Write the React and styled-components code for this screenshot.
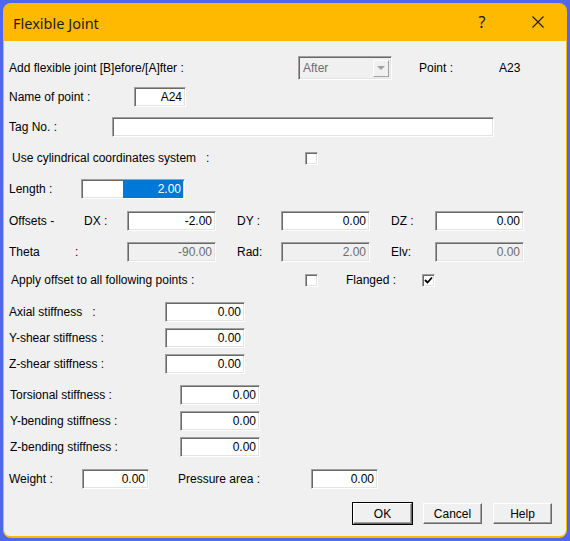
import React from 'react';
import styled, { createGlobalStyle } from 'styled-components';

const GlobalStyle = createGlobalStyle`
  html, body {
    margin: 0;
    padding: 0;
    background: #4f66ee;
  }
  body {
    font-family: "Liberation Sans", Arial, sans-serif;
  }
`;

const Screen = styled.div`
  width: 570px;
  height: 541px;
  padding: 3px;
  box-sizing: border-box;
`;

const Window = styled.div`
  width: 564px;
  height: 535px;
  background: #ffb900;
  border-radius: 8px;
  display: flex;
  flex-direction: column;
  overflow: hidden;
  padding: 0 1px 2px 1px;
  box-sizing: border-box;
`;

const TitleBar = styled.div`
  height: 38px;
  display: flex;
  align-items: center;
  padding-left: 9px;
  color: #1c1c1c;
  font-family: "Noto Sans", "Open Sans", sans-serif;
  font-size: 14.5px;
  flex-shrink: 0;
`;

const TitleText = styled.div`
  flex: 1;
  padding-top: 1px;
`;

const TitleButton = styled.div`
  width: 56px;
  height: 38px;
  display: flex;
  align-items: center;
  justify-content: center;
  font-size: 16px;
`;

const Body = styled.div`
  flex: 1;
  background: #f0f0f0;
  display: flex;
  flex-direction: column;
  padding: 15px 14px 0 5px;
  color: #000;
  font-size: 12px;
  border-radius: 0 0 6px 6px;
`;

const Row = styled.div`
  display: flex;
  align-items: center;
  height: ${(p) => p.$h || 20}px;
  margin-top: ${(p) => p.$top || 0}px;
`;

const Label = styled.div`
  width: ${(p) => p.$w}px;
  padding-left: ${(p) => p.$pl || 0}px;
  box-sizing: border-box;
  white-space: pre;
  flex-shrink: 0;
`;

const Field = styled.div`
  width: ${(p) => p.$w}px;
  height: ${(p) => p.$h || 20}px;
  box-sizing: border-box;
  flex-shrink: 0;
  background: ${(p) => (p.$disabled ? '#f0f0f0' : '#fff')};
  color: ${(p) => (p.$disabled ? '#6d6d6d' : '#000')};
  border-top: 1px solid #a0a0a0;
  border-left: 1px solid #a0a0a0;
  border-right: 1px solid #fff;
  border-bottom: 1px solid #fff;
  box-shadow: inset 1px 1px 0 #696969, inset -1px -1px 0 #e3e3e3;
  display: flex;
  align-items: center;
  justify-content: ${(p) => (p.$left ? 'flex-start' : 'flex-end')};
  padding: 0 3px 0 4px;
  overflow: hidden;
`;

const Selected = styled.span`
  background: #0078d7;
  color: #fff;
  align-self: stretch;
  display: flex;
  align-items: center;
  justify-content: flex-end;
  margin-right: -2px;
  padding-right: 2px;
`;

const Combo = styled(Field)`
  padding: 0 2px 0 4px;
  justify-content: space-between;
`;

const ComboArrow = styled.div`
  width: 16px;
  height: 17px;
  background: #f0f0f0;
  border-top: 1px solid #fff;
  border-left: 1px solid #fff;
  border-right: 1px solid #a0a0a0;
  border-bottom: 1px solid #a0a0a0;
  box-sizing: border-box;
  display: flex;
  align-items: center;
  justify-content: center;
`;

const Check = styled.div`
  width: 13px;
  height: 13px;
  box-sizing: border-box;
  flex-shrink: 0;
  background: #fff;
  border-top: 1px solid #a0a0a0;
  border-left: 1px solid #a0a0a0;
  border-right: 1px solid #fff;
  border-bottom: 1px solid #fff;
  box-shadow: inset 1px 1px 0 #696969, inset -1px -1px 0 #e3e3e3;
  display: flex;
  align-items: center;
  justify-content: center;
`;

const Gap = styled.div`
  width: ${(p) => p.$w}px;
  flex-shrink: 0;
`;

const ButtonBar = styled.div`
  display: flex;
  justify-content: flex-end;
  gap: 11px;
  margin-top: 14px;
`;

const Button = styled.div`
  width: 59px;
  height: 21px;
  box-sizing: border-box;
  background: #f0f0f0;
  border-top: 1px solid #fff;
  border-left: 1px solid #fff;
  border-right: 1px solid #696969;
  border-bottom: 1px solid #696969;
  box-shadow: inset -1px -1px 0 #a0a0a0;
  outline: ${(p) => (p.$default ? '1px solid #000' : 'none')};
  display: flex;
  align-items: center;
  justify-content: center;
  font-size: 12px;
`;

const CheckMark = () => (
  <svg width="9" height="9" viewBox="0 0 9 9">
    <path d="M1 4 L3.5 6.5 L8 1.5" stroke="#000" strokeWidth="1.8" fill="none" />
  </svg>
);

const CloseIcon = () => (
  <svg width="12" height="12" viewBox="0 0 12 12">
    <path d="M0.5 0.5 L11.5 11.5 M11.5 0.5 L0.5 11.5" stroke="#1c1c1c" strokeWidth="1.1" />
  </svg>
);

const StiffRow = ({ top, label, w, pl }) => (
  <Row $top={top}>
    <Label $w={w} $pl={pl}>{label}</Label>
    <Field $w={80}>0.00</Field>
  </Row>
);

export default function App() {
  return (
    <Screen>
      <GlobalStyle />
      <Window>
        <TitleBar>
          <TitleText>Flexible Joint</TitleText>
          <TitleButton>?</TitleButton>
          <TitleButton><CloseIcon /></TitleButton>
        </TitleBar>
        <Body>
          <Row $h={24}>
            <Label $w={289}>Add flexible joint [B]efore/[A]fter :</Label>
            <Combo $w={94} $h={24} $disabled $left>
              <span>After</span>
              <ComboArrow>
                <svg width="8" height="4" viewBox="0 0 8 4"><path d="M0 0 H8 L4 4 Z" fill="#a0a0a0" /></svg>
              </ComboArrow>
            </Combo>
            <Gap $w={27} />
            <Label $w={80}>Point :</Label>
            <Label $w={40}>A23</Label>
          </Row>
          <Row $top={7}>
            <Label $w={125}>Name of point :</Label>
            <Field $w={52}>A24</Field>
          </Row>
          <Row $top={10}>
            <Label $w={103}>Tag No. :</Label>
            <Field $w={382} />
          </Row>
          <Row $top={12} $h={18}>
            <Label $w={296} $pl={3}>{'Use cylindrical coordinates system   :'}</Label>
            <Check />
          </Row>
          <Row $top={12}>
            <Label $w={72}>Length :</Label>
            <Field $w={104}>
              <Selected style={{ width: 58 }}>2.00</Selected>
            </Field>
          </Row>
          <Row $top={12}>
            <Label $w={75}>Offsets -</Label>
            <Label $w={43}>DX :</Label>
            <Field $w={89}>-2.00</Field>
            <Label $w={65} $pl={21}>DY :</Label>
            <Field $w={89}>0.00</Field>
            <Label $w={65} $pl={21}>DZ :</Label>
            <Field $w={89}>0.00</Field>
          </Row>
          <Row $top={11}>
            <Label $w={66}>Theta</Label>
            <Label $w={52}>:</Label>
            <Field $w={89} $disabled>-90.00</Field>
            <Label $w={65} $pl={21}>Rad:</Label>
            <Field $w={89} $disabled>2.00</Field>
            <Label $w={65} $pl={21}>Elv:</Label>
            <Field $w={89} $disabled>0.00</Field>
          </Row>
          <Row $top={10} $h={16}>
            <Label $w={296} $pl={2}>Apply offset to all following points :</Label>
            <Check />
            <Gap $w={28} />
            <Label $w={76}>Flanged :</Label>
            <Check><CheckMark /></Check>
          </Row>
          <StiffRow top={14} w={156} label="Axial stiffness   :" />
          <StiffRow top={6} w={156} label="Y-shear stiffness :" />
          <StiffRow top={6} w={156} label="Z-shear stiffness :" />
          <StiffRow top={11} w={171} pl={1} label="Torsional stiffness :" />
          <StiffRow top={6} w={171} pl={1} label="Y-bending stiffness :" />
          <StiffRow top={6} w={171} pl={1} label="Z-bending stiffness :" />
          <Row $top={12}>
            <Label $w={73}>Weight :</Label>
            <Field $w={67}>0.00</Field>
            <Label $w={162} $pl={29}>Pressure area :</Label>
            <Field $w={67}>0.00</Field>
          </Row>
          <ButtonBar>
            <Button $default>OK</Button>
            <Button>Cancel</Button>
            <Button>Help</Button>
          </ButtonBar>
        </Body>
      </Window>
    </Screen>
  );
}
